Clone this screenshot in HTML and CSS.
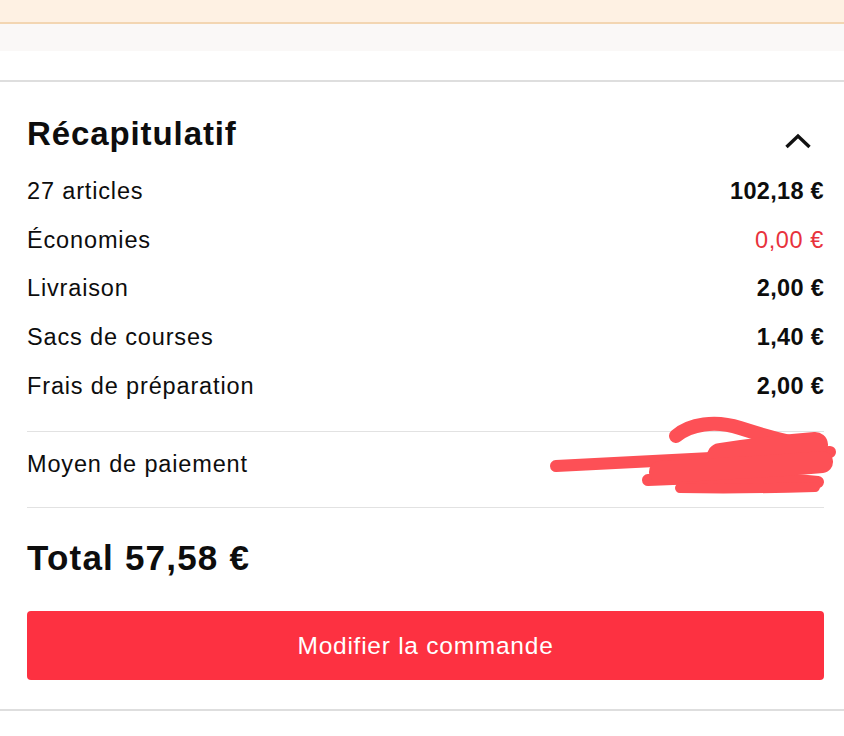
FILE: index.html
```html
<!DOCTYPE html>
<html lang="fr">
<head>
<meta charset="utf-8">
<link rel="stylesheet" href="styles.css">
</head>
<body>
<div class="topbar"></div>
<div class="greyband"></div>
<div class="gap"></div>
<section class="summary">
  <div class="head">
    <h1 class="title">Récapitulatif</h1>
    <svg class="chevron" width="28" height="16" viewBox="0 0 28 16"><path d="M2.5 14 L14 3 L25.5 14" fill="none" stroke="#111" stroke-width="3.4" stroke-linecap="butt" stroke-linejoin="miter"/></svg>
  </div>
  <div class="rows">
    <div class="row"><span>27 articles</span><span class="val">102,18 €</span></div>
    <div class="row"><span>Économies</span><span class="val red">0,00 €</span></div>
    <div class="row"><span>Livraison</span><span class="val">2,00 €</span></div>
    <div class="row"><span>Sacs de courses</span><span class="val">1,40 €</span></div>
    <div class="row"><span>Frais de préparation</span><span class="val">2,00 €</span></div>
  </div>
  <div class="pay">
    <span>Moyen de paiement</span>
    <svg class="scribble" width="300" height="90" viewBox="540 410 300 90">
      <g fill="none" stroke="#fd5056" stroke-linecap="round" stroke-linejoin="round">
        <path d="M676 436 C690 424 715 420 740 428 C765 436 790 443 812 446" stroke-width="14"/>
        <path d="M556 466 C620 463 700 458 830 452" stroke-width="12"/>
        <path d="M648 480 C700 478 760 476 818 482" stroke-width="12"/>
        <path d="M680 488 C730 489 780 488 815 487" stroke-width="10"/>
        <path d="M720 456 C760 450 790 447 815 445" stroke-width="26"/>
        <path d="M660 472 C720 469 790 465 822 462" stroke-width="22"/>
      </g>
    </svg>
  </div>
  <div class="total">Total 57,58 €</div>
  <button class="cta">Modifier la commande</button>
</section>
<div class="bottomline"></div>
</body>
</html>
```
FILE: styles.css
```css
* { box-sizing: border-box; }
html, body { margin: 0; padding: 0; background: #fff; }
body {
  font-family: "Liberation Sans", Arial, sans-serif;
  color: #0d0d0d;
  width: 844px;
  height: 736px;
  overflow: hidden;
}
.topbar {
  height: 24px;
  background: #fef1e3;
  border-bottom: 2px solid #f3d6b2;
}
.greyband { height: 27px; background: #faf8f7; }
.gap { height: 31px; background: #fff; border-bottom: 2px solid #dedede; }
.summary { padding: 0 20px 0 27px; }
.head {
  display: flex;
  justify-content: space-between;
  align-items: flex-start;
  padding-top: 32px;
  height: 85px;
}
.title {
  margin: 0;
  font-size: 33px;
  font-weight: 700;
  letter-spacing: 0.9px;
  line-height: 40px;
}
.chevron { margin-right: 12px; margin-top: 19px; }
.rows {
  display: flex;
  flex-direction: column;
  padding-bottom: 21px;
  border-bottom: 1.5px solid #e2e2e2;
}
.row {
  display: flex;
  justify-content: space-between;
  align-items: center;
  height: 48.7px;
  font-size: 23.5px;
  letter-spacing: 0.85px;
}
.val { font-weight: 700; letter-spacing: 0.3px; }
.val.red { color: #e8323c; font-weight: 400; letter-spacing: 0.6px; }
.pay {
  position: relative;
  height: 76px;
  display: flex;
  align-items: flex-start;
  padding-top: 19px;
  line-height: 26px;
  font-size: 23.5px;
  letter-spacing: 0.85px;
  border-bottom: 1.5px solid #e2e2e2;
}
.scribble { position: absolute; left: 513px; top: -22px; }
.total {
  height: 103px;
  display: flex;
  align-items: center;
  padding-bottom: 3px;
  font-size: 35px;
  font-weight: 700;
  letter-spacing: 1.2px;
}
.cta {
  display: block;
  width: 797px;
  height: 69px;
  border: none;
  border-radius: 4px;
  background: #fd3141;
  color: #fff;
  font-family: "Liberation Sans", Arial, sans-serif;
  font-size: 24.5px;
  font-weight: 400;
  letter-spacing: 0.75px;
}
.bottomline { margin-top: 29px; border-top: 2px solid #dedede; height: 30px; }
```
